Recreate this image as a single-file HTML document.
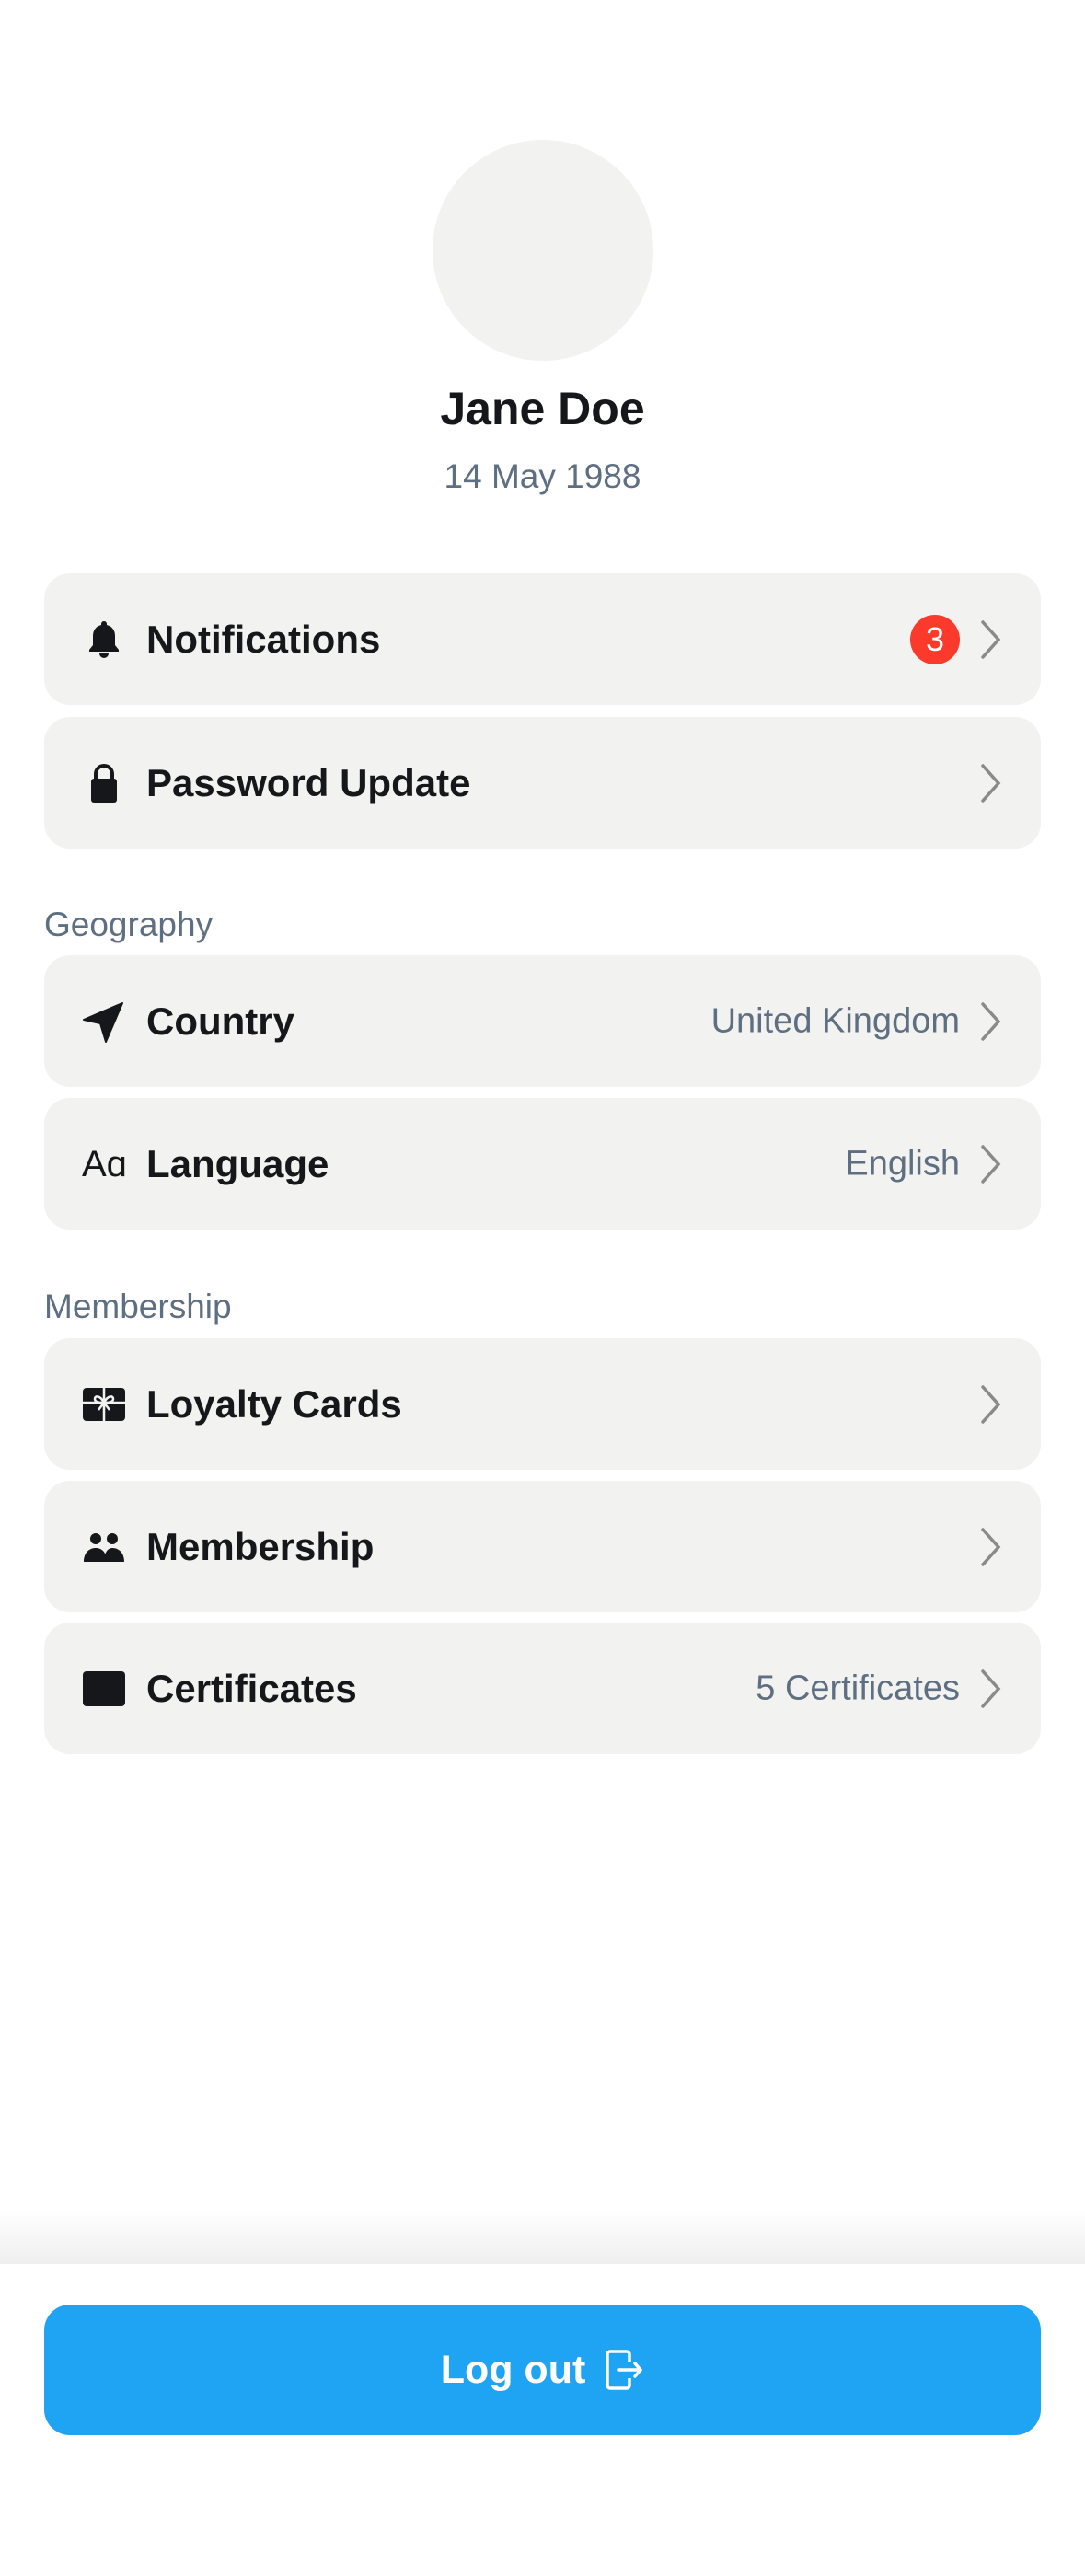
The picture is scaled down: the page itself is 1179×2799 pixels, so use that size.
<!DOCTYPE html>
<html><head><meta charset="utf-8"><style>
*{margin:0;padding:0;box-sizing:border-box}
body{width:1179px;height:2799px;background:#fff;font-family:"Liberation Sans",sans-serif;position:relative;overflow:hidden}
.av{position:absolute;left:470px;top:152px;width:240px;height:240px;border-radius:50%;background:#f2f2f0}
.name{position:absolute;top:415px;width:100%;text-align:center;font-size:50px;font-weight:700;color:#15171a}
.date{position:absolute;top:497px;width:100%;text-align:center;font-size:37px;color:#5f6f82}
.sec{position:absolute;left:48px;font-size:37px;color:#5f6f82}
.card{position:absolute;left:48px;width:1083px;height:143px;background:#f2f2f0;border-radius:28px}
.ic{position:absolute;left:41px;top:50%;transform:translateY(-50%);width:48px;height:48px}
.lbl{position:absolute;left:111px;top:50%;transform:translateY(-50%);font-size:42px;font-weight:700;color:#15171a}
.val{position:absolute;right:88px;top:50%;transform:translateY(-50%);font-size:38px;color:#5f6f82}
.chev{position:absolute;right:42px;top:50%;transform:translateY(-50%);width:24px;height:44px}
.badge{position:absolute;right:88px;top:50%;transform:translateY(-50%);width:54px;height:54px;border-radius:50%;background:#fb3a2c;color:#fff;font-size:36px;text-align:center;line-height:54px}
.shadow{position:absolute;left:0;top:2400px;width:1179px;height:60px;background:linear-gradient(#fff,#efefef)}
.bottom{position:absolute;left:0;top:2460px;width:1179px;height:339px;background:#fff}
.btn{position:absolute;left:48px;top:2504px;width:1083px;height:142px;background:#1fa3f3;border-radius:28px;color:#fff;font-size:43px;font-weight:700;display:flex;align-items:center;justify-content:center;gap:20px}
</style></head><body>
<div class="av"></div>
<div class="name">Jane Doe</div>
<div class="date">14 May 1988</div>

<div class="card" style="top:623px">
<svg class="ic" viewBox="0 0 48 48"><path d="M24 4c-2 0-3 1.5-3 3v1c-6 1.5-9 6-9 12v10l-4 5v2h32v-2l-4-5V20c0-6-3-10.5-9-12V7c0-1.5-1-3-3-3z M19 39a5 5 0 0 0 10 0z" fill="#15171a"/></svg>
<div class="lbl">Notifications</div>
<div class="badge">3</div>
<svg class="chev" viewBox="0 0 24 44"><path d="M3 3l17 19L3 41" fill="none" stroke="#8a8a8a" stroke-width="3.5" stroke-linecap="round"/></svg>
</div>

<div class="card" style="top:779px">
<svg class="ic" viewBox="0 0 48 48"><path d="M15 20v-6a9 9 0 0 1 18 0v6" fill="none" stroke="#15171a" stroke-width="4"/><rect x="10" y="19" width="28" height="26" rx="3" fill="#15171a"/></svg>
<div class="lbl">Password Update</div>
<svg class="chev" viewBox="0 0 24 44"><path d="M3 3l17 19L3 41" fill="none" stroke="#8a8a8a" stroke-width="3.5" stroke-linecap="round"/></svg>
</div>

<div class="sec" style="top:984px">Geography</div>
<div class="card" style="top:1038px">
<svg class="ic" viewBox="0 0 48 48"><path d="M44 4L2 22l18 4 6 20z" fill="#15171a" stroke="#15171a" stroke-width="2" stroke-linejoin="round"/></svg>
<div class="lbl">Country</div>
<div class="val">United Kingdom</div>
<svg class="chev" viewBox="0 0 24 44"><path d="M3 3l17 19L3 41" fill="none" stroke="#8a8a8a" stroke-width="3.5" stroke-linecap="round"/></svg>
</div>

<div class="card" style="top:1193px">
<div class="ic" style="font-size:40px;color:#15171a;line-height:48px;width:60px">Aɑ</div>
<div class="lbl">Language</div>
<div class="val">English</div>
<svg class="chev" viewBox="0 0 24 44"><path d="M3 3l17 19L3 41" fill="none" stroke="#8a8a8a" stroke-width="3.5" stroke-linecap="round"/></svg>
</div>

<div class="sec" style="top:1399px">Membership</div>
<div class="card" style="top:1454px">
<svg class="ic" viewBox="0 0 48 48"><rect x="1" y="6" width="46" height="36" rx="4" fill="#15171a"/><path d="M1 22h46M24 6v36M24 22c-4-8-10-8-10-4s6 4 10 4c4 0 10 0 10-4s-6-4-10 4M24 22l-6 8M24 22l6 8" fill="none" stroke="#f2f2f0" stroke-width="2.5"/></svg>
<div class="lbl">Loyalty Cards</div>
<svg class="chev" viewBox="0 0 24 44"><path d="M3 3l17 19L3 41" fill="none" stroke="#8a8a8a" stroke-width="3.5" stroke-linecap="round"/></svg>
</div>

<div class="card" style="top:1609px">
<svg class="ic" viewBox="0 0 48 48"><circle cx="15" cy="15" r="6" fill="#15171a"/><circle cx="33" cy="15" r="6" fill="#15171a"/><path d="M2 40c0-10 6-15 13-15s12 5 12 15z M24 40c0-8 3-15 9-15 7 0 13 5 13 15z" fill="#15171a"/></svg>
<div class="lbl">Membership</div>
<svg class="chev" viewBox="0 0 24 44"><path d="M3 3l17 19L3 41" fill="none" stroke="#8a8a8a" stroke-width="3.5" stroke-linecap="round"/></svg>
</div>

<div class="card" style="top:1763px">
<svg class="ic" viewBox="0 0 48 48"><rect x="1" y="5" width="46" height="38" rx="4" fill="#15171a"/></svg>
<div class="lbl">Certificates</div>
<div class="val">5 Certificates</div>
<svg class="chev" viewBox="0 0 24 44"><path d="M3 3l17 19L3 41" fill="none" stroke="#8a8a8a" stroke-width="3.5" stroke-linecap="round"/></svg>
</div>

<div class="shadow"></div>
<div class="bottom"></div>
<div class="btn"><span>Log out</span>
<svg width="44" height="46" viewBox="0 0 44 46"><path d="M28 14V6a3 3 0 0 0-3-3H7a3 3 0 0 0-3 3v34a3 3 0 0 0 3 3h18a3 3 0 0 0 3-3v-8" fill="none" stroke="#fff" stroke-width="3.5"/><path d="M16 23h24M34 16l6 7-6 7" fill="none" stroke="#fff" stroke-width="3.5" stroke-linecap="round" stroke-linejoin="round"/></svg>
</div>
</body></html>
